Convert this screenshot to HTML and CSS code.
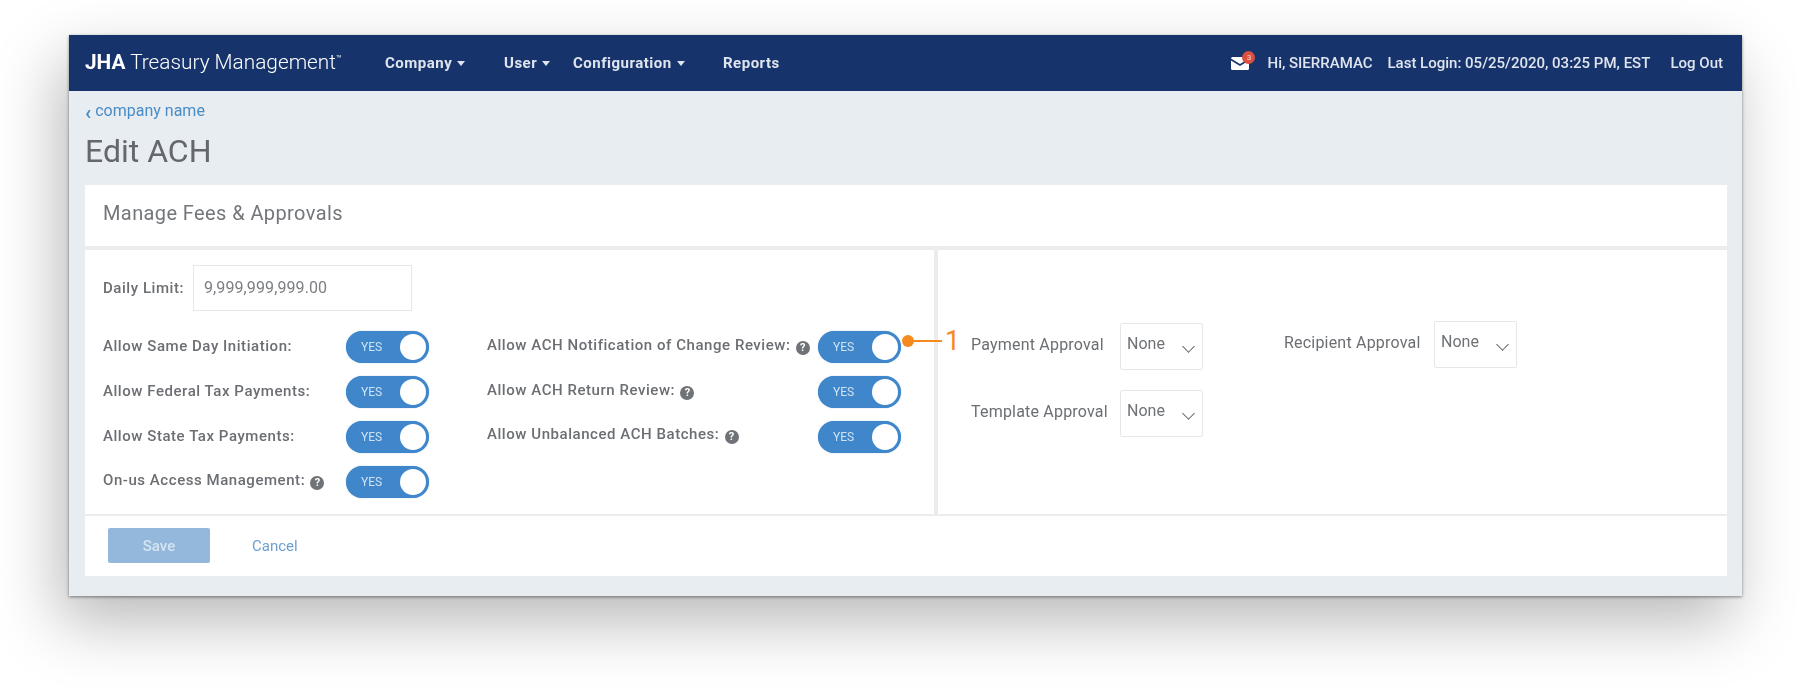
FILE: index.html
```html
<!DOCTYPE html>
<html lang="en">
<head>
    <meta charset="UTF-8">
    <title>Edit ACH</title>
    <link rel="stylesheet" href="styles.css">
</head>
<body>
    <div class="app-window">
        <header class="navbar">
            <div class="brand"><b>JHA</b> Treasury Management<sup>™</sup></div>
            <nav class="main-nav">
                <a class="nav-company">Company <i class="caret"></i></a>
                <a class="nav-user">User <i class="caret"></i></a>
                <a class="nav-config">Configuration <i class="caret"></i></a>
                <a>Reports</a>
            </nav>
            <div class="user-nav">
                <span class="mail">
                    <svg width="18" height="13" viewBox="0 0 18 13">
                        <path d="M0 1.5 Q0 0 1.5 0 H16.5 Q18 0 18 1.5 L9 7 Z" fill="#fff"/>
                        <path d="M0 3.5 L9 9 L18 3.5 V11.5 Q18 13 16.5 13 H1.5 Q0 13 0 11.5 Z" fill="#fff"/>
                    </svg>
                    <span class="mail-badge">3</span>
                </span>
                <span class="hi">Hi, SIERRAMAC</span>
                <span class="last-login">Last Login: 05/25/2020, 03:25 PM, EST</span>
                <a>Log Out</a>
            </div>
        </header>

        <main class="content">
            <a class="back-link"><span class="chev">‹</span> company name</a>
            <h1>Edit ACH</h1>

            <section class="panel panel-head">Manage Fees &amp; Approvals</section>

            <section class="panel-body">
                <div class="col-left">
                    <div class="limit-row">
                        <label>Daily Limit:</label>
                        <div class="limit-input">9,999,999,999.00</div>
                    </div>
                    <div class="toggle-columns">
                        <div class="toggle-list list-a">
                            <div class="toggle-row"><label>Allow Same Day Initiation:</label><span class="toggle">YES</span></div>
                            <div class="toggle-row"><label>Allow Federal Tax Payments:</label><span class="toggle">YES</span></div>
                            <div class="toggle-row"><label>Allow State Tax Payments:</label><span class="toggle">YES</span></div>
                            <div class="toggle-row"><label>On-us Access Management: <i class="help">?</i></label><span class="toggle">YES</span></div>
                        </div>
                        <div class="toggle-list list-b">
                            <div class="toggle-row"><label>Allow ACH Notification of Change Review: <i class="help">?</i></label><span class="toggle">YES</span></div>
                            <div class="toggle-row"><label>Allow ACH Return Review: <i class="help">?</i></label><span class="toggle">YES</span></div>
                            <div class="toggle-row"><label class="label-raised">Allow Unbalanced ACH Batches: <i class="help">?</i></label><span class="toggle">YES</span></div>
                        </div>
                    </div>
                </div>
                <div class="col-right">
                    <div class="approval-list">
                        <div class="approval-row"><label>Payment Approval</label><div class="select-box">None <i class="chevron"></i></div></div>
                        <div class="approval-row"><label>Template Approval</label><div class="select-box">None <i class="chevron"></i></div></div>
                    </div>
                    <div class="approval-list list-recipient">
                        <div class="approval-row"><label>Recipient Approval</label><div class="select-box">None <i class="chevron"></i></div></div>
                    </div>
                </div>
            </section>

            <section class="panel panel-foot">
                <button class="btn-save">Save</button>
                <a class="cancel">Cancel</a>
            </section>
        </main>

        <div class="callout"><span class="callout-dot"></span><span class="callout-line"></span><span class="callout-num">1</span></div>
    </div>
</body>
</html>
```

FILE: styles.css
```css
:root {
    --navy: #17336b;
    --page-bg: #e8edf1;
    --blue: #3f86cb;
    --label: #6b6e72;
    --link: #4a8cc4;
    --line: #e6e7e8;
    --gap: #ececec;
    --orange: #f58a1f;
}

* {
    box-sizing: border-box;
    margin: 0;
    padding: 0;
}

body {
    font-family: Roboto, 'Liberation Sans', sans-serif;
    background: #fff;
    overflow: hidden;
    height: 698px;
}

label {
    display: block;
}

.app-window {
    position: relative;
    width: 1673px;
    height: 561px;
    margin: 35px 0 0 69px;
    background: var(--page-bg);
    box-shadow: 0 1px 3px rgba(0, 0, 0, 0.45), -10px 26px 60px rgba(0, 0, 0, 0.28);
}

/* the source shot is soft, so everything but the callout gets a slight blur */
.navbar,
.content {
    filter: blur(0.7px);
}

.navbar {
    height: 56px;
    background: var(--navy);
    color: #dfe5ee;
    display: flex;
    align-items: center;
    font-size: 15px;
    font-weight: 700;
    padding: 0 19px 0 16px;
}

.brand {
    width: 300px;
    margin-bottom: 3px;
    color: #fff;
    font-size: 20.8px;
    font-weight: 300;
}

.brand b {
    font-weight: 700;
}

.brand sup {
    font-size: 10px;
    vertical-align: 7px;
    line-height: 0;
}

.main-nav {
    display: flex;
    letter-spacing: 0.5px;
}

.nav-company { width: 119px; }
.nav-user { width: 69px; }
.nav-config { width: 150px; }

.caret {
    display: inline-block;
    border: 4.5px solid transparent;
    border-top: 5px solid #dfe5ee;
    border-bottom: 0;
    margin-left: 1px;
    vertical-align: 2px;
}

.user-nav {
    margin-left: auto;
    display: flex;
    align-items: center;
    font-weight: 500;
}

.mail {
    position: relative;
    width: 36px;
    height: 13px;
}

.mail svg {
    display: block;
}

.mail-badge {
    position: absolute;
    left: 11px;
    top: -6px;
    width: 13px;
    height: 13px;
    border-radius: 50%;
    background: #d9503f;
    color: #f3c8c0;
    font-size: 8px;
    line-height: 13px;
    text-align: center;
}

.hi { width: 120px; }
.last-login { width: 283px; }

.content {
    padding: 0 15px 0 16px;
}

.back-link {
    display: block;
    height: 0;
    padding-top: 10px;
    color: var(--link);
    font-size: 16px;
}

.chev {
    font-size: 20px;
    font-weight: 700;
    line-height: 14px;
    vertical-align: -3px;
}

h1 {
    padding-top: 32px;
    height: 84px;
    font-size: 32px;
    line-height: 37px;
    font-weight: 400;
    color: #64676b;
}

.panel {
    background: #fff;
}

.panel-head {
    height: 65px;
    padding-left: 18px;
    border-bottom: 4px solid var(--gap);
    font-size: 20px;
    letter-spacing: 0.4px;
    line-height: 56px;
    color: #73767a;
}

.panel-body {
    height: 264px;
    display: flex;
    color: var(--label);
    font-size: 15px;
    font-weight: 500;
    letter-spacing: 0.55px;
}

.col-left {
    width: 849px;
    background: #fff;
    padding: 15px 0 0 18px;
}

.col-right {
    flex: 1;
    border-left: 4px solid var(--gap);
    background: #fff;
    padding: 73px 0 0 33px;
    display: flex;
    font-weight: 400;
    letter-spacing: 0;
}

.limit-row {
    display: flex;
    align-items: center;
    height: 46px;
    margin-bottom: 20px;
}

.limit-row label {
    width: 90px;
}

.limit-input {
    width: 219px;
    height: 46px;
    border: 1px solid var(--line);
    font-weight: 400;
    font-size: 16px;
    letter-spacing: 0.1px;
    line-height: 44px;
    padding-left: 10px;
    color: #7b7e82;
}

.toggle-columns {
    display: flex;
    gap: 58px;
}

.toggle-list {
    display: flex;
    flex-direction: column;
    gap: 13px;
}

.toggle-row {
    display: flex;
    align-items: center;
    height: 32px;
}

.toggle-row label {
    margin-bottom: 3px;
}

.toggle-row .label-raised {
    margin-bottom: 6px;
}

.list-a label { width: 243px; }
.list-b label { width: 331px; }

.help {
    display: inline-block;
    width: 14px;
    height: 14px;
    margin-left: 1px;
    border-radius: 50%;
    background: #6f7276;
    color: #fff;
    font-size: 11px;
    font-style: normal;
    font-weight: 700;
    line-height: 14px;
    letter-spacing: 0;
    text-align: center;
    vertical-align: -1px;
}

.toggle {
    position: relative;
    width: 83px;
    height: 32px;
    border-radius: 16px;
    background: var(--blue);
    color: #cfe2f4;
    font-size: 12px;
    font-weight: 400;
    letter-spacing: 0;
    line-height: 32px;
    padding-left: 15px;
    box-shadow: 0 0 1px rgba(63, 134, 203, 0.8);
}

.toggle::after {
    content: '';
    position: absolute;
    right: 3px;
    top: 3px;
    width: 26px;
    height: 26px;
    border-radius: 50%;
    background: #fff;
}

.approval-list {
    display: flex;
    flex-direction: column;
    gap: 20px;
}

.list-recipient {
    margin: -2px 0 0 81px;
}

.approval-row {
    display: flex;
    align-items: center;
    height: 47px;
}

.approval-row label {
    width: 149px;
    font-size: 16px;
    letter-spacing: 0.2px;
    margin-bottom: 4px;
}

.list-recipient label {
    width: 150px;
}

.select-box {
    position: relative;
    width: 83px;
    height: 47px;
    border: 1px solid var(--line);
    border-radius: 2px;
    padding-left: 6px;
    line-height: 40px;
    color: #6f7276;
    font-size: 16px;
}

.chevron {
    position: absolute;
    right: 9px;
    top: 18px;
    width: 9px;
    height: 9px;
    border-right: 1.5px solid #666;
    border-bottom: 1.5px solid #666;
    transform: rotate(45deg);
}

.panel-foot {
    height: 62px;
    border-top: 2px solid var(--gap);
    display: flex;
    align-items: center;
    padding: 0 0 1px 23px;
}

.btn-save {
    width: 102px;
    height: 35px;
    border: 0;
    border-radius: 2px;
    background: #93b8dc;
    color: #d5e4f2;
    font-family: inherit;
    font-size: 15px;
    font-weight: 500;
}

.cancel {
    margin-left: 42px;
    color: #6d9fce;
    font-size: 15px;
}

.callout {
    position: absolute;
    left: 833px;
    top: 291px;
    display: flex;
    align-items: center;
    height: 30px;
}

.callout-dot {
    width: 12px;
    height: 12px;
    border-radius: 50%;
    background: var(--orange);
}

.callout-line {
    width: 28px;
    height: 2px;
    background: var(--orange);
}

.callout-num {
    margin-left: 3px;
    color: var(--orange);
    font-size: 27px;
    line-height: 30px;
}
```
